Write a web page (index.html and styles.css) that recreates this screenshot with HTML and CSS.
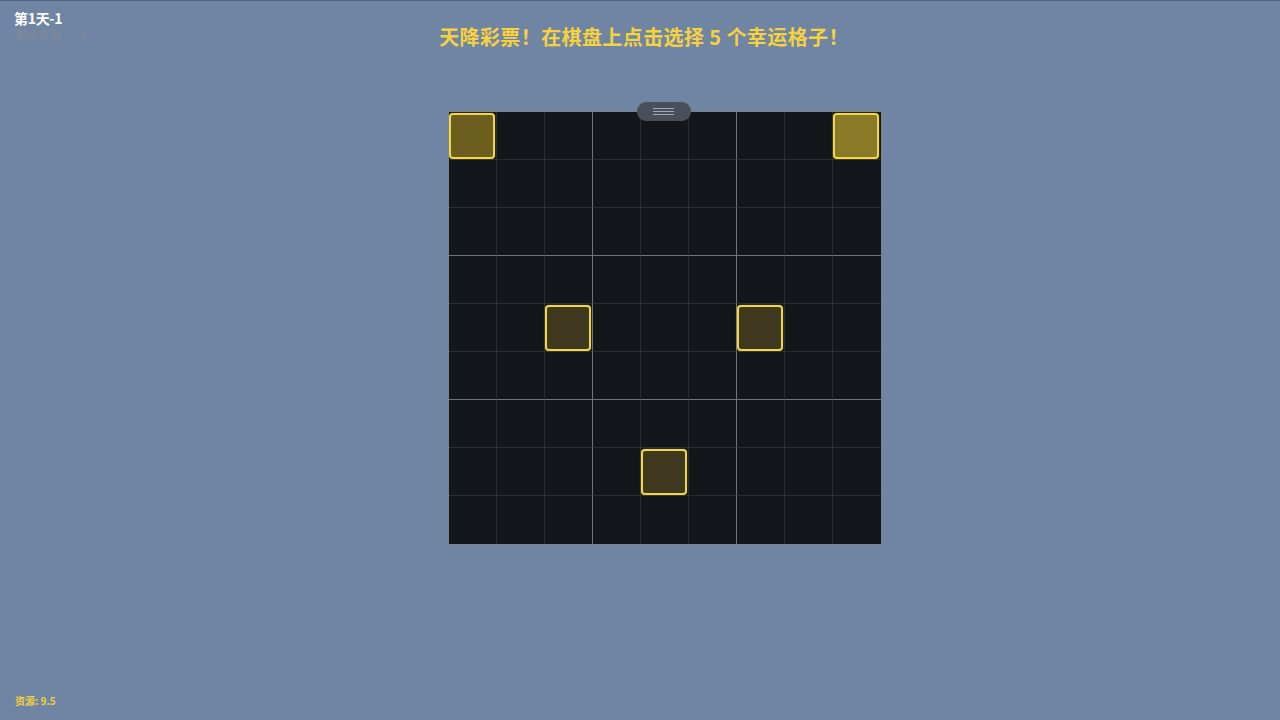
FILE: index.html
```html
<!DOCTYPE html>
<html lang="zh">
<head>
<meta charset="utf-8">
<title>天降彩票</title>
<link rel="stylesheet" href="styles.css">
</head>
<body>
<div class="hud">
  <div class="day">第1天-1</div>
  <div class="ghost">剩余步数 · 3</div>
</div>
<header class="top">
  <h1 class="title">天降彩票！在棋盘上点击选择 5 个幸运格子！</h1>
</header>
<main class="stage">
  <div class="board-wrap">
    <div class="handle"><span></span><span></span><span></span></div>
    <div class="board">
      <div class="cell"><div class="pick pick-a"></div></div><div class="cell"></div><div class="cell"></div><div class="cell"></div><div class="cell"></div><div class="cell"></div><div class="cell"></div><div class="cell"></div><div class="cell"><div class="pick pick-b"></div></div>
      <div class="cell"></div><div class="cell"></div><div class="cell"></div><div class="cell"></div><div class="cell"></div><div class="cell"></div><div class="cell"></div><div class="cell"></div><div class="cell"></div>
      <div class="cell"></div><div class="cell"></div><div class="cell"></div><div class="cell"></div><div class="cell"></div><div class="cell"></div><div class="cell"></div><div class="cell"></div><div class="cell"></div>
      <div class="cell"></div><div class="cell"></div><div class="cell"></div><div class="cell"></div><div class="cell"></div><div class="cell"></div><div class="cell"></div><div class="cell"></div><div class="cell"></div>
      <div class="cell"></div><div class="cell"></div><div class="cell"><div class="pick pick-c"></div></div><div class="cell"></div><div class="cell"></div><div class="cell"></div><div class="cell"><div class="pick pick-c"></div></div><div class="cell"></div><div class="cell"></div>
      <div class="cell"></div><div class="cell"></div><div class="cell"></div><div class="cell"></div><div class="cell"></div><div class="cell"></div><div class="cell"></div><div class="cell"></div><div class="cell"></div>
      <div class="cell"></div><div class="cell"></div><div class="cell"></div><div class="cell"></div><div class="cell"></div><div class="cell"></div><div class="cell"></div><div class="cell"></div><div class="cell"></div>
      <div class="cell"></div><div class="cell"></div><div class="cell"></div><div class="cell"></div><div class="cell"><div class="pick pick-c"></div></div><div class="cell"></div><div class="cell"></div><div class="cell"></div><div class="cell"></div>
      <div class="cell"></div><div class="cell"></div><div class="cell"></div><div class="cell"></div><div class="cell"></div><div class="cell"></div><div class="cell"></div><div class="cell"></div><div class="cell"></div>
    </div>
  </div>
</main>
<footer class="res">资源: 9.5</footer>
</body>
</html>
```
FILE: styles.css
```css
html, body {
  margin: 0;
  padding: 0;
}
body {
  width: 1280px;
  height: 720px;
  box-sizing: border-box;
  background: #7085a4;
  border-top: 1px solid #4f6180;
  font-family: "Noto Sans CJK SC", "Noto Sans", sans-serif;
  position: relative;
  overflow: hidden;
}
.hud {
  position: absolute;
  left: 14px;
  top: 8px;
}
.day {
  color: #ffffff;
  font-weight: 700;
  font-size: 14px;
  line-height: 18px;
  letter-spacing: -0.3px;
}
.ghost {
  color: rgba(220, 150, 90, 0.2);
  font-size: 12px;
  line-height: 16px;
}
.top {
  display: flex;
  justify-content: center;
  padding-top: 22px;
  padding-left: 8px;
}
.title {
  margin: 0;
  color: #f6d23f;
  font-size: 20px;
  line-height: 28px;
  font-weight: 700;
  letter-spacing: 0.4px;
}
.stage {
  display: flex;
  justify-content: center;
  padding-left: 49px;
  padding-top: 60px;
}
.board-wrap {
  position: relative;
}
.handle {
  position: absolute;
  left: 189px;
  top: -9px;
  width: 54px;
  height: 19px;
  border-radius: 9px;
  background: #4a5059;
  display: flex;
  flex-direction: column;
  justify-content: center;
  align-items: center;
  gap: 2px;
  z-index: 2;
}
.handle span {
  display: block;
  width: 21px;
  height: 1px;
  background: #a3a9b3;
}
.board {
  display: grid;
  grid-template-columns: repeat(9, 48px);
  grid-template-rows: repeat(9, 48px);
  background: #13161b;
  border: 1px solid #7a8290;
}
.cell {
  box-sizing: border-box;
  border-right: 1px solid #292d34;
  border-bottom: 1px solid #292d34;
  position: relative;
}
.cell:nth-child(3n) {
  border-right-color: #6f7682;
}
.cell:nth-child(9n) {
  border-right: none;
}
.cell:nth-child(n+19):nth-child(-n+27),
.cell:nth-child(n+46):nth-child(-n+54) {
  border-bottom-color: #6f7682;
}
.cell:nth-child(n+73) {
  border-bottom: none;
}
.pick {
  box-sizing: border-box;
  width: 46px;
  height: 46px;
  margin: 1px 0 0 0;
  border: 2px solid #f3d642;
  border-radius: 4px;
  box-shadow: 0 0 2px rgba(243, 214, 66, 0.35);
}
.pick-a {
  background: #6b5e1f;
}
.pick-b {
  background: #8a7a27;
}
.pick-c {
  background: #3f3920;
}
.res {
  position: absolute;
  left: 15px;
  bottom: 12px;
  color: #f3d23c;
  font-size: 10px;
  font-weight: 700;
  line-height: 14px;
}
```
